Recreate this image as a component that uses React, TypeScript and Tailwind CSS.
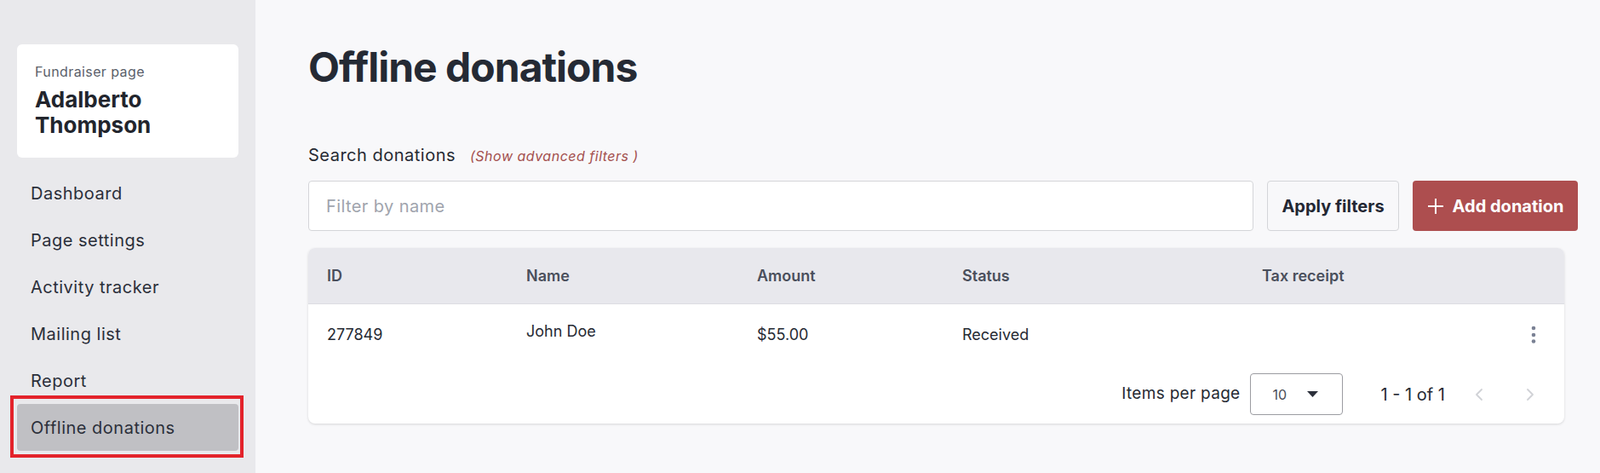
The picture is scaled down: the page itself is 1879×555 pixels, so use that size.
import React from "react";
import { ChevronLeft, ChevronRight } from "lucide-react";

const navItems = [
  "Dashboard",
  "Page settings",
  "Activity tracker",
  "Mailing list",
  "Report",
  "Offline donations",
];

const columns = ["ID", "Name", "Amount", "Status", "Tax receipt"];

const donations = [{ id: "277849", name: "John Doe", amount: "$55.00", status: "Received" }];

export default function App() {
  return (
    <div className="flex min-h-[555px] font-['Inter','Noto_Sans',sans-serif] text-[#262a33]">
      {/* Sidebar */}
      <aside className="w-[300px] shrink-0 bg-[#e9e9ec] px-5 pt-[52px]">
        <div className="bg-white rounded-md pl-[21px] pr-4 pt-5 pb-[23px]">
          <p className="text-base leading-6 text-[#5b5f6a] tracking-[0.4px]">Fundraiser page</p>
          <h2 className="mt-1.5 text-[26px] leading-[30px] font-bold text-[#22252d]">Adalberto Thompson</h2>
        </div>

        <nav className="mt-3.5 flex flex-col">
          {navItems.map((item) => {
            const active = item === "Offline donations";
            return (
              <div
                key={item}
                className={
                  active
                    ? "relative h-[55px] flex items-center pl-4 rounded bg-[#c0c0c4] text-[20px] tracking-[0.5px] text-[#2b2f3a]"
                    : "h-[55px] flex items-center pl-4 text-[20px] tracking-[0.5px] text-[#2b2f3a]"
                }
              >
                {item}
                {active && (
                  <span className="absolute -left-2 -right-1.5 -top-2.5 -bottom-2 border-4 border-[#e3232b]" />
                )}
              </div>
            );
          })}
        </nav>
      </aside>

      {/* Main */}
      <main className="flex-1 bg-[#f8f8fa] pl-[62px] pr-[26px] pt-[55px] pb-10">
        <h1 className="text-[48px] leading-none font-bold tracking-[-1px] text-[#252a34]">Offline donations</h1>

        <div className="mt-[65px] flex items-baseline gap-[17px]">
          <span className="text-[20px] leading-7 tracking-[0.5px]">Search donations</span>
          <span className="text-base italic text-[#a4504e] tracking-[0.5px]">(Show advanced filters )</span>
        </div>

        {/* Filters */}
        <div className="mt-4 flex h-[59px] gap-4">
          <input
            type="text"
            placeholder="Filter by name"
            className="flex-1 h-full bg-white border border-[#d4d5d9] rounded px-5 text-[20px] tracking-[0.4px] outline-none placeholder:text-[#a0a4ad]"
          />
          <button className="w-[155px] h-full border border-[#d4d5d9] rounded bg-[#f8f8fa] text-[20px] font-bold text-[#232733]">
            Apply filters
          </button>
          <button className="w-[194px] h-full rounded bg-[#ad4e4f] text-white text-[20px] font-bold flex items-center justify-center gap-[10px]">
            <svg width="20" height="20" viewBox="0 0 20 20" fill="none" stroke="currentColor" strokeWidth="2">
              <path d="M10 1v18M1 10h18" />
            </svg>
            Add donation
          </button>
        </div>

        {/* Table */}
        <div className="mt-5 mr-4 bg-white rounded-lg overflow-hidden shadow-[0_1px_3px_rgba(0,0,0,0.14)]">
          <div className="grid grid-cols-[234px_271px_241px_352px_1fr] h-[66px] items-center pl-[22px] bg-[#e8e8ed] border-b border-[#dcdde2] text-[18px] font-semibold text-[#4a4f5c]">
            {columns.map((c) => (
              <span key={c}>{c}</span>
            ))}
          </div>

          {donations.map((d) => (
            <div
              key={d.id}
              className="grid grid-cols-[234px_271px_241px_352px_1fr] h-[71px] items-center pl-[22px] text-[18px]"
            >
              <span>{d.id}</span>
              <span className="pb-2">{d.name}</span>
              <span>{d.amount}</span>
              <span>{d.status}</span>
              <div className="flex justify-end pr-[33px]">
                <svg width="6" height="22" viewBox="0 0 6 22" fill="#7a8194">
                  <circle cx="3" cy="3" r="2.3" />
                  <circle cx="3" cy="11" r="2.3" />
                  <circle cx="3" cy="18.5" r="2.3" />
                </svg>
              </div>
            </div>
          ))}

          {/* Pagination */}
          <div className="h-[69px] flex items-center justify-end pr-7">
            <span className="text-[19px] tracking-[0.3px]">Items per page</span>
            <div className="ml-[11px] w-[109px] h-[49px] border border-[#9b9ca1] rounded flex items-center pl-[26px]">
              <span className="text-base text-[#4b4f58]">10</span>
              <svg className="ml-6" width="13" height="7" viewBox="0 0 13 7" fill="#2b2f3a">
                <path d="M0 0h13L6.5 7z" />
              </svg>
            </div>
            <span className="ml-[45px] text-[20px]">1 - 1 of 1</span>
            <button className="ml-7 w-6 flex justify-center text-[#d0d2d6]">
              <ChevronLeft size={28} strokeWidth={1.8} />
            </button>
            <button className="ml-9 w-6 flex justify-center text-[#d0d2d6]">
              <ChevronRight size={28} strokeWidth={1.8} />
            </button>
          </div>
        </div>
      </main>
    </div>
  );
}
